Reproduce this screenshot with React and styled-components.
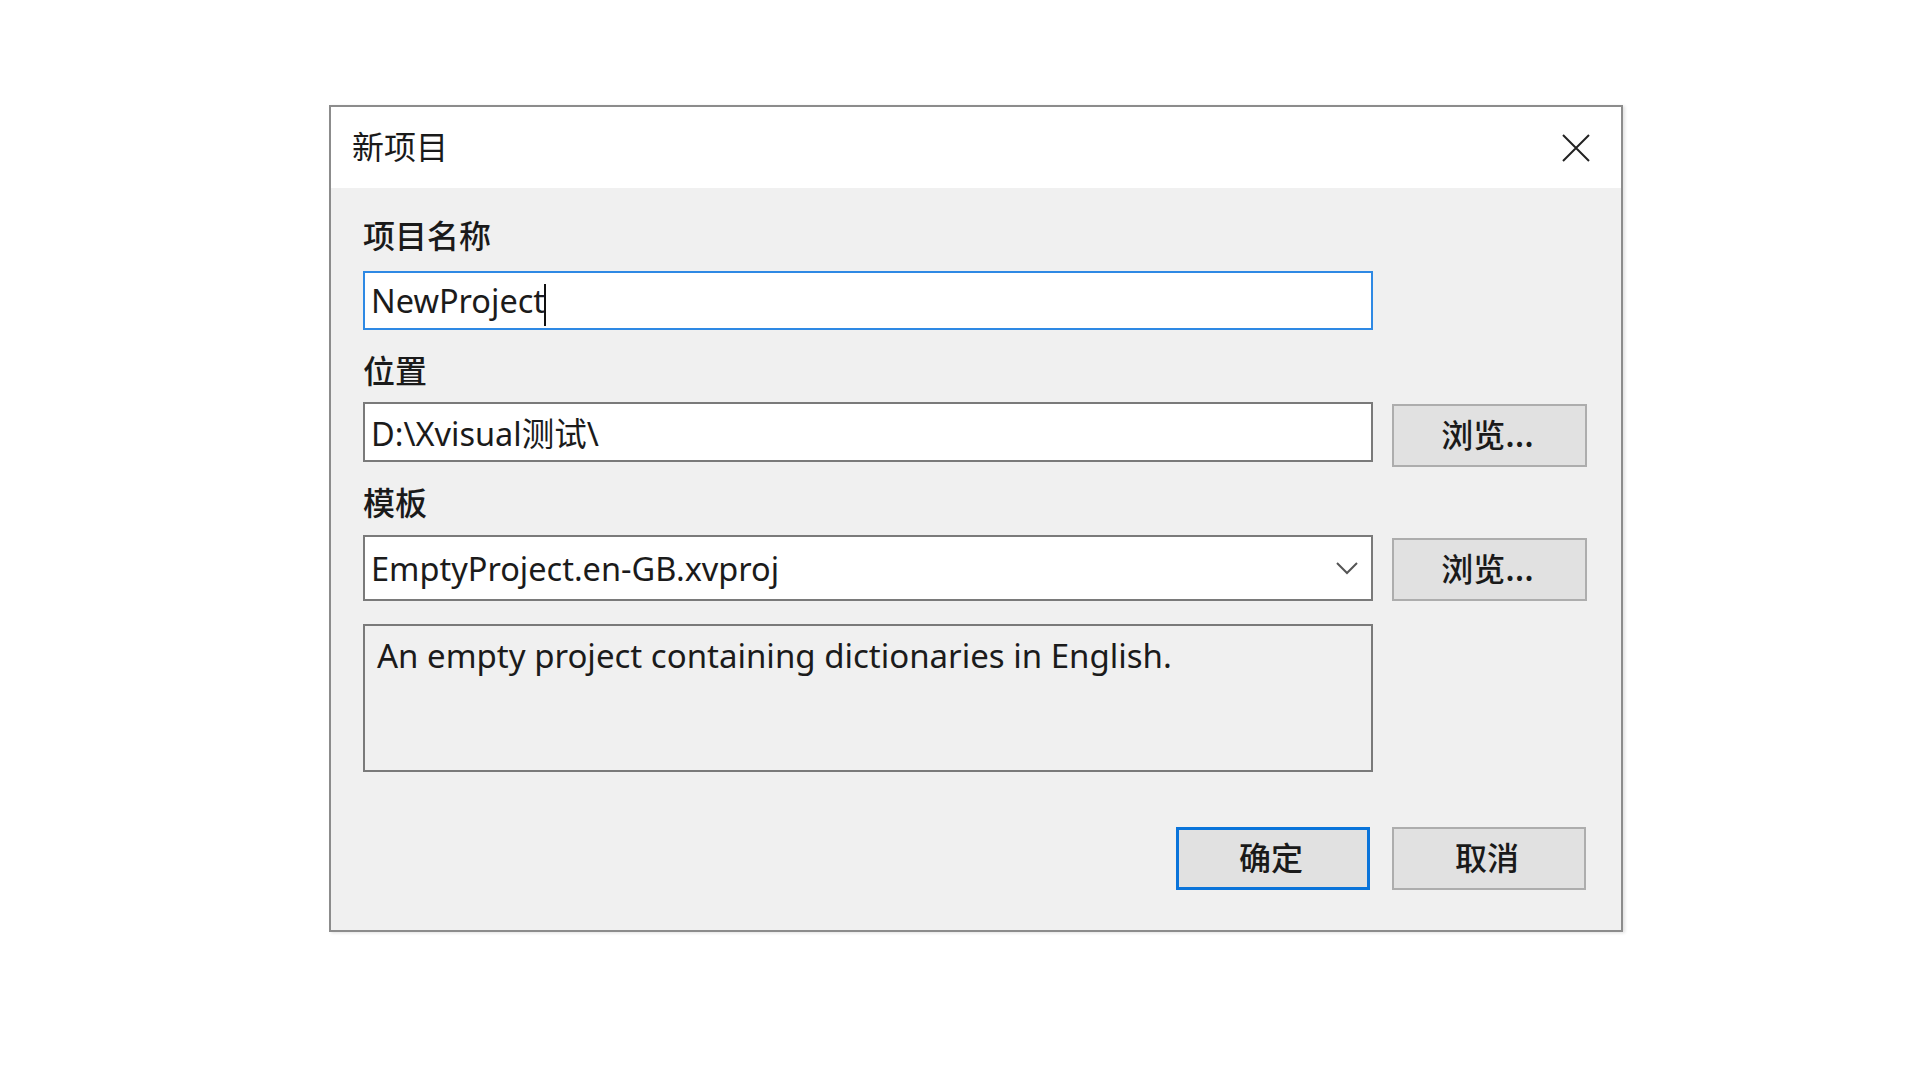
import React from 'react';
import styled, { createGlobalStyle } from 'styled-components';

const GlobalStyle = createGlobalStyle`
  html, body {
    margin: 0;
    background: #ffffff;
  }
  body {
    font-family: "Noto Sans", "Noto Sans CJK SC", sans-serif;
    color: #1b1b1b;
  }
`

const Page = styled.div`
  width: 1920px;
  height: 1080px;
  box-sizing: border-box;
  padding: 105px 0 0 329px;
`

const Dialog = styled.div`
  width: 1294px;
  height: 827px;
  box-sizing: border-box;
  border: 2px solid #8c8c8c;
  background: #f0f0f0;
  display: flex;
  flex-direction: column;
  box-shadow: 2px 1px 3px rgba(0, 0, 0, 0.12);
`

const TitleBar = styled.div`
  height: 81px;
  flex-shrink: 0;
  background: #ffffff;
  display: flex;
  align-items: center;
  justify-content: space-between;
  padding: 0 30px 0 21px;
`

const Title = styled.div`
  font-family: "Noto Sans CJK SC", sans-serif;
  font-size: 32px;
  line-height: 40px;
  padding-bottom: 6px;
  color: #1a1a1a;
`

const CloseButton = styled.button`
  width: 30px;
  height: 30px;
  padding: 0;
  border: none;
  background: transparent;
  display: flex;
  align-items: center;
  justify-content: center;
`

const Body = styled.div`
  display: flex;
  flex-direction: column;
  padding: 0 34px 0 32px;
`

const Label = styled.div`
  font-family: "Noto Sans CJK SC", sans-serif;
  font-weight: 500;
  font-size: 32px;
  line-height: 32px;
  height: 40px;
  margin-top: ${p => p.$gap}px;
  color: #1a1a1a;
`

const Row = styled.div`
  display: grid;
  grid-template-columns: 1010px 195px;
  column-gap: 19px;
  align-items: start;
  margin-top: ${p => p.$gap}px;
`

const Field = styled.div`
  height: ${p => p.$height}px;
  box-sizing: border-box;
  border: 2px solid ${p => (p.$focused ? '#2e89e4' : '#7a7a7a')};
  background: #ffffff;
  display: flex;
  align-items: center;
  padding: 0 13px 0 6px;
  font-size: 32.5px;
  white-space: nowrap;
`

const FieldText = styled.span`
  flex: 1;
  padding-top: ${p => p.$nudge || 0}px;
`

const Caret = styled.span`
  display: inline-block;
  width: 2px;
  height: 42px;
  background: #111111;
  vertical-align: middle;
  margin-left: -1px;
`

const Description = styled.div`
  width: 1010px;
  height: 148px;
  box-sizing: border-box;
  border: 2px solid #7a7a7a;
  background: #f0f0f0;
  margin-top: 23px;
  padding: 7px 12px;
  font-size: 33px;
`

const Button = styled.button`
  width: ${p => p.$width || 195}px;
  height: 63px;
  box-sizing: border-box;
  margin-top: ${p => p.$offset || 0}px;
  background: #e1e1e1;
  border: ${p => (p.$primary ? '3px solid #0a74da' : '2px solid #adadad')};
  font-family: "Noto Sans CJK SC", sans-serif;
  font-weight: 500;
  font-size: 32px;
  color: #1a1a1a;
  padding: 0 4px 5px 0;
`

const Footer = styled.div`
  display: flex;
  justify-content: flex-end;
  gap: 22px;
  margin-top: 55px;
  padding-right: 1px;
`

function CloseIcon() {
  return (
    <svg width="28" height="28" viewBox="0 0 28 28">
      <path d="M1 1 L27 27 M27 1 L1 27" stroke="#222" strokeWidth="2" fill="none" />
    </svg>
  )
}

function Chevron() {
  return (
    <svg width="22" height="13" viewBox="0 0 22 13">
      <path d="M1 1 L11 11 L21 1" stroke="#555" strokeWidth="2" fill="none" />
    </svg>
  )
}

export default function App() {
  return (
    <Page>
      <GlobalStyle />
      <Dialog>
        <TitleBar>
          <Title>新项目</Title>
          <CloseButton aria-label="close">
            <CloseIcon />
          </CloseButton>
        </TitleBar>
        <Body>
          <Label $gap={30}>项目名称</Label>
          <Row $gap={13}>
            <Field $height={59} $focused>
              <FieldText $nudge={3}>NewProject<Caret /></FieldText>
            </Field>
          </Row>

          <Label $gap={23}>位置</Label>
          <Row $gap={9}>
            <Field $height={60}>
              <FieldText>D:\Xvisual测试\</FieldText>
            </Field>
            <Button $offset={2}>浏览...</Button>
          </Row>

          <Label $gap={18}>模板</Label>
          <Row $gap={10}>
            <Field $height={66}>
              <FieldText>EmptyProject.en-GB.xvproj</FieldText>
              <Chevron />
            </Field>
            <Button $offset={3}>浏览...</Button>
          </Row>

          <Description>An empty project containing dictionaries in English.</Description>

          <Footer>
            <Button $primary $width={194}>确定</Button>
            <Button $width={194}>取消</Button>
          </Footer>
        </Body>
      </Dialog>
    </Page>
  )
}
